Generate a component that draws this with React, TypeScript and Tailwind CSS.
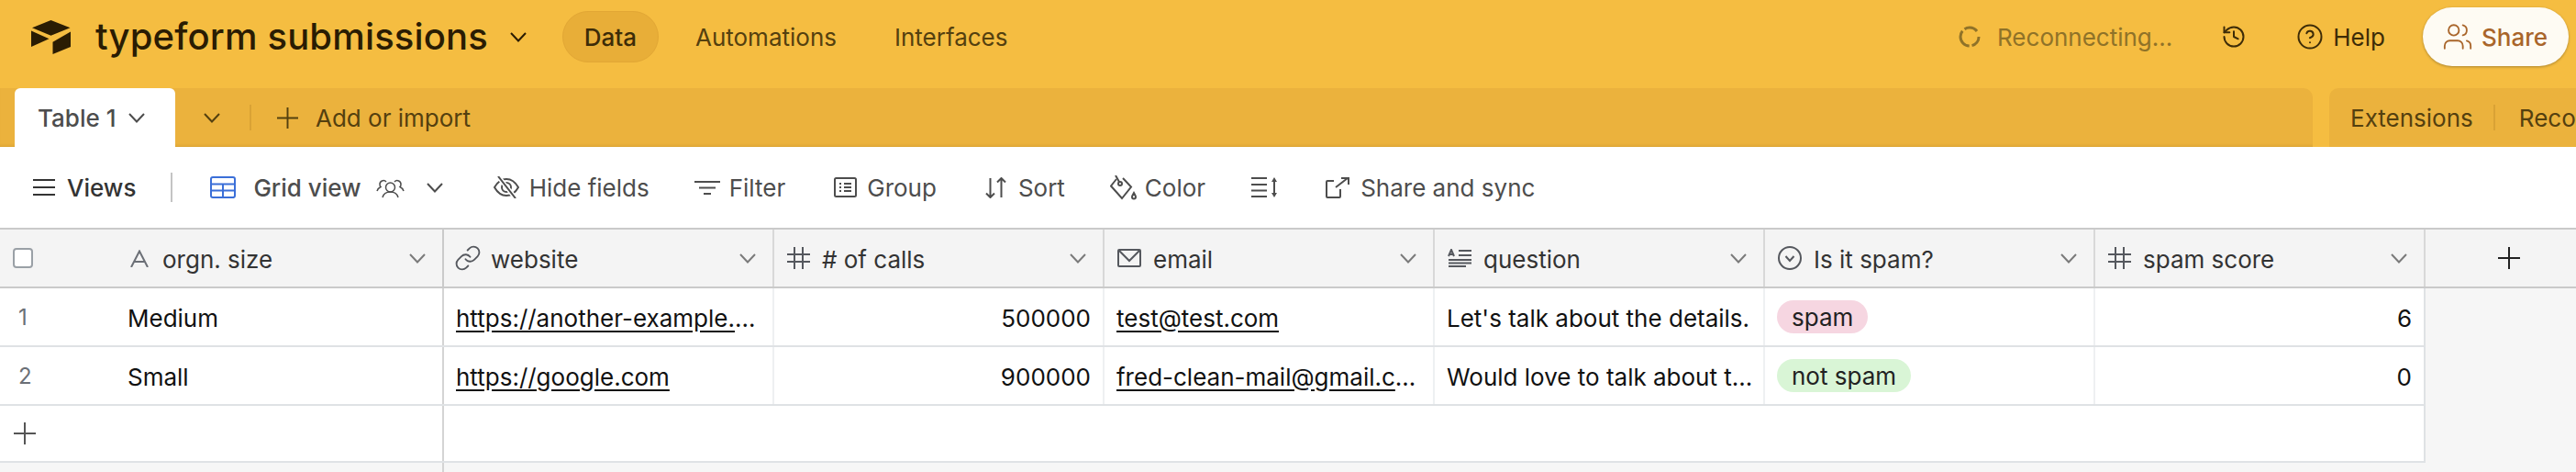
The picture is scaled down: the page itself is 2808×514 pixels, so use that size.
import React from 'react';
import { CircleHelp, History, Link, Users } from 'lucide-react';

const font = { fontFamily: 'Inter, "Noto Sans", sans-serif' };

// Airtable box logo
const Logo = () => (
  <svg width="43" height="37" viewBox="0 0 43 37" fill="#2a1c03">
    <path d="M21.5 0 42.500 8.300 21.500 16.800 1 8.300Z" />
    <path d="M23.500 23.800 43 12.500V29L23.500 37Z" />
    <path d="M0 11.500 19.500 20.300 0 29Z" />
  </svg>
);

const Chevron = ({ className = '' }: { className?: string }) => (
  <svg width="18" height="11" viewBox="0 0 18 11" fill="none" stroke="currentColor" strokeWidth="2" className={`shrink-0 ${className}`}>
    <path d="M1 1 9 9.500 17 1" />
  </svg>
);

const PlusIcon = ({ size, className = '' }: { size: number; className?: string }) => (
  <svg width={size} height={size} viewBox="0 0 24 24" fill="none" stroke="currentColor" strokeWidth="2" className={`shrink-0 ${className}`}>
    <path d="M12 0V24M0 12H24" />
  </svg>
);

const Spinner = () => (
  <svg width="24" height="24" viewBox="0 0 24 24" fill="none" stroke="#8f7228" strokeWidth="3">
    <circle cx="12" cy="12" r="10" strokeDasharray="13 3 22 3 15 7" />
  </svg>
);

const MenuIcon = () => (
  <svg width="24" height="18" viewBox="0 0 24 18" fill="none" stroke="#333" strokeWidth="2">
    <path d="M0 1H24M0 9H24M0 17H24" />
  </svg>
);

const GridIcon = () => (
  <svg width="28" height="24" viewBox="0 0 28 24" fill="none" stroke="#3b6fd8" strokeWidth="2">
    <rect x="1" y="1" width="26" height="22" rx="2" />
    <path d="M1 8.500H27M1 15.500H27M14 8.500V23" />
  </svg>
);

const PeopleIcon = () => (
  <svg width="31" height="23" viewBox="0 0 31 23" fill="none" stroke="#4d4d4d" strokeWidth="1.500">
    <circle cx="15.500" cy="11" r="5" />
    <path d="M7 22c1-4 4-6 8.500-6s7.500 2 8.500 6" />
    <path d="M11 5a4 4 0 0 0-7 3c0 1 .5 2 1 2.500C3 11.500 1.500 13 1 15" />
    <path d="M20 5a4 4 0 0 1 7 3c0 1-.5 2-1 2.500 2 1 3.500 2.500 4 4.500" />
  </svg>
);

const HideIcon = () => (
  <svg width="28" height="24" viewBox="0 0 28 24" fill="none" stroke="#4d4d4d" strokeWidth="2">
    <path d="M1 12C5 5 9 3 14 3S23 5 27 12C23 19 19 21 14 21S5 19 1 12Z" />
    <circle cx="14" cy="12" r="5" />
    <path d="M5 0 24 24" stroke="#fff" strokeWidth="5" />
    <path d="M5 0 24 24" />
  </svg>
);

const FilterIcon = () => (
  <svg width="28" height="15" viewBox="0 0 28 15" fill="none" stroke="#4d4d4d" strokeWidth="2">
    <path d="M0 1H28M5 7.500H23M10 14H18" />
  </svg>
);

const GroupIcon = () => (
  <svg width="25" height="22" viewBox="0 0 25 22" fill="none" stroke="#4d4d4d" strokeWidth="2">
    <rect x="1" y="1" width="23" height="20" rx="1.500" />
    <path d="M6 7H8M11 7H19M6 11H8M11 11H19M6 15H8M11 15H19" />
  </svg>
);

const SortIcon = () => (
  <svg width="23" height="23" viewBox="0 0 23 23" fill="none" stroke="#4d4d4d" strokeWidth="2">
    <path d="M5.500 1V22M1 17.500 5.500 22 10 17.500M17.500 22V1M13 5.500 17.500 1 22 5.500" />
  </svg>
);

const ColorIcon = () => (
  <svg width="29" height="27" viewBox="0 0 29 27" fill="none" stroke="#4d4d4d" strokeWidth="2">
    <path d="M7 4 1 11.500 13 25 23 12.500 14 3" />
    <circle cx="11" cy="9" r="2" />
    <path d="M10 7 6 0" />
    <path d="M26 19c1.500 2.500 2 3.500 2 4.500a2 2 0 0 1-4 0c0-1 .5-2 2-4.500Z" />
  </svg>
);

const RowHeightIcon = () => (
  <svg width="29" height="22" viewBox="0 0 29 22" fill="none" stroke="#4d4d4d" strokeWidth="2">
    <path d="M0 1H17M0 8H17M0 14.500H17M0 21H17" />
    <path d="M25 4V18" />
    <path d="M25 0 28 5H22ZM25 22 28 17H22Z" fill="#4d4d4d" stroke="none" />
  </svg>
);

const ShareSyncIcon = () => (
  <svg width="26" height="23" viewBox="0 0 26 23" fill="none" stroke="#4d4d4d" strokeWidth="2">
    <path d="M9 4H2a1 1 0 0 0-1 1v16a1 1 0 0 0 1 1h13a1 1 0 0 0 1-1V13" />
    <path d="M11 11 24 1M17 1H25V8" />
  </svg>
);

const TextIcon = () => (
  <svg width="20" height="19" viewBox="0 0 20 19" fill="none" stroke="#6b6f76" strokeWidth="2">
    <path d="M1 19 10 1.500 19 19M4.500 13H15.500" />
  </svg>
);

const HashIcon = () => (
  <svg width="25" height="24" viewBox="0 0 25 24" fill="none" stroke="#55585e" strokeWidth="2">
    <path d="M8 0V24M17 0V24M0 8H25M0 16H25" />
  </svg>
);

const MailIcon = () => (
  <svg width="26" height="20" viewBox="0 0 26 20" fill="none" stroke="#55585e" strokeWidth="2">
    <rect x="1" y="1" width="24" height="18" rx="1" />
    <path d="M1.500 1.500 13 13 24.500 1.500" />
  </svg>
);

const LongTextIcon = () => (
  <svg width="26" height="20" viewBox="0 0 26 20" fill="none" stroke="#55585e" strokeWidth="2">
    <path d="M1 8 4 1 7 8M2 6H6M12 2H26M12 7H26M1 12H26M1 15.500H26M1 19H20" />
  </svg>
);

const SelectIcon = () => (
  <svg width="26" height="26" viewBox="0 0 26 26" fill="none" stroke="#55585e" strokeWidth="2">
    <circle cx="13" cy="13" r="12" />
    <path d="M8.500 11 13 16 17.500 11" />
  </svg>
);

const ToolItem = ({ icon, label, className, gap }: { icon: React.ReactNode; label: string; className: string; gap: string }) => (
  <div className={`flex items-center ${className}`}>
    {icon}
    <span className={gap}>{label}</span>
  </div>
);

const columns = [
  { title: 'website', icon: <Link className="w-[30px] h-[30px] -mx-[3px] text-[#55585e]" strokeWidth={1.5} /> },
  { title: '# of calls', icon: <HashIcon /> },
  { title: 'email', icon: <MailIcon /> },
  { title: 'question', icon: <LongTextIcon /> },
  { title: 'Is it spam?', icon: <SelectIcon /> },
  { title: 'spam score', icon: <HashIcon /> },
];

const rows = [
  {
    id: 1,
    size: 'Medium',
    website: 'https://another-example.com/contact',
    calls: '500000',
    email: 'test@test.com',
    question: "Let's talk about the details.",
    spam: 'spam',
    pill: 'bg-[#f6d6e1]',
    score: '6',
  },
  {
    id: 2,
    size: 'Small',
    website: 'https://google.com',
    calls: '900000',
    email: 'fred-clean-mail@gmail.com',
    question: 'Would love to talk about t...',
    spam: 'not spam',
    pill: 'bg-[#d9f5d6]',
    score: '0',
  },
];

const cell = 'w-[360px] shrink-0 h-full border-r-2 border-[#eef0f2] flex items-center pl-[13px] pr-[13px] pt-[2px]';

export default function App() {
  return (
    <div className="w-[2808px] h-[514px] overflow-hidden bg-[#f6f6f6] text-[26px]" style={font}>
      {/* Top bar */}
      <div className="h-[96px] bg-[#f5bd41] flex items-center pl-[34px] pb-[16px] text-[#54400f]">
        <Logo />
        <h1 className="ml-[27px] text-[40px] font-medium tracking-[0.15px] text-[#2a1c03] leading-none">typeform submissions</h1>
        <Chevron className="ml-[24px] text-[#2a1c03]" />
        <div className="ml-[39px] w-[105px] h-[56px] rounded-full bg-[#e8ae38] border border-[#e2a735] flex items-center justify-center font-medium text-[#3d2c08]">
          Data
        </div>
        <span className="ml-[40px]">Automations</span>
        <span className="ml-[63px]">Interfaces</span>
        <div className="ml-auto flex items-center pr-[8px]">
          <Spinner />
          <span className="ml-[18px] text-[#8f7228]">Reconnecting...</span>
          <History className="ml-[53px] w-[28px] h-[28px] text-[#3d2c08]" strokeWidth={1.7} />
          <CircleHelp className="ml-[54px] w-[30px] h-[30px] text-[#3d2c08]" strokeWidth={1.6} />
          <span className="ml-[10px] text-[#3d2c08]">Help</span>
          <div className="ml-[41px] w-[159px] h-[64px] rounded-full bg-[#fefbf3] shadow-[0_1px_3px_rgba(0,0,0,0.3)] flex items-center justify-center text-[#a9652a] font-medium">
            <Users className="w-[34px] h-[34px] -ml-[2px]" strokeWidth={1.3} />
            <span className="ml-[9px]">Share</span>
          </div>
        </div>
      </div>

      {/* Tab row */}
      <div className="h-[64px] bg-[#f5bd41] flex text-[#54400f]">
        <div className="w-[2521px] bg-[#ebb23d] rounded-tr-[10px] flex items-end shadow-[inset_0_-3px_3px_-2px_rgba(160,110,20,0.25)]">
          <div className="ml-[16px] w-[175px] h-[64px] bg-white rounded-t-[6px] flex items-center pl-[25px] text-[#4d4d4d] font-medium">
            Table 1
            <Chevron className="ml-[14px]" />
          </div>
          <div className="h-[64px] flex items-center">
            <Chevron className="ml-[31px]" />
            <div className="ml-[32px] w-[2px] h-[28px] bg-[#d9a235]" />
            <PlusIcon size={23} className="ml-[28px]" />
            <span className="ml-[19px]">Add or import</span>
          </div>
        </div>
        <div className="ml-[18px] flex-1 bg-[#ebb23d] rounded-tl-[10px] flex items-center pl-[23px] overflow-hidden whitespace-nowrap">
          Extensions
          <div className="ml-[22px] w-[2px] h-[28px] shrink-0 bg-[#d9a235]" />
          <span className="ml-[26px]">Record templates</span>
        </div>
      </div>

      {/* View toolbar */}
      <div className="h-[88px] bg-white flex items-center text-[#4d4d4d]">
        <div className="ml-[36px]"><MenuIcon /></div>
        <span className="ml-[13px] font-medium text-[#333]">Views</span>
        <div className="ml-[38px] w-[2px] h-[32px] bg-[#c4c4c4]" />
        <div className="ml-[41px]"><GridIcon /></div>
        <span className="ml-[19px] font-medium">Grid view</span>
        <div className="ml-[16px]"><PeopleIcon /></div>
        <Chevron className="ml-[24px]" />
        <ToolItem className="ml-[55px]" gap="ml-[11px]" icon={<HideIcon />} label="Hide fields" />
        <ToolItem className="ml-[49px]" gap="ml-[10px]" icon={<FilterIcon />} label="Filter" />
        <ToolItem className="ml-[53px]" gap="ml-[11px]" icon={<GroupIcon />} label="Group" />
        <ToolItem className="ml-[53px]" gap="ml-[13px]" icon={<SortIcon />} label="Sort" />
        <ToolItem className="ml-[49px]" gap="ml-[9px]" icon={<ColorIcon />} label="Color" />
        <div className="ml-[50px]"><RowHeightIcon /></div>
        <ToolItem className="ml-[52px]" gap="ml-[12px]" icon={<ShareSyncIcon />} label="Share and sync" />
      </div>

      {/* Grid header */}
      <div className="h-[66px] bg-[#f4f4f4] border-y-2 border-[#cacaca] flex items-center text-[#333]">
        <div className="w-[484px] shrink-0 h-full border-r-2 border-[#cacaca] flex items-center pl-[14px] pr-[18px]">
          <div className="w-[22px] h-[22px] rounded-[4px] border-2 border-[#9aa0a6] bg-white" />
          <div className="ml-[106px]"><TextIcon /></div>
          <span className="ml-[15px] pt-[2px]">orgn. size</span>
          <Chevron className="ml-auto text-[#7a7a7a]" />
        </div>
        {columns.map((col) => (
          <div key={col.title} className="w-[360px] shrink-0 h-full border-r-2 border-[#d8d8d8] flex items-center pl-[14px] pr-[18px]">
            {col.icon}
            <span className="ml-[13px] pt-[2px]">{col.title}</span>
            <Chevron className="ml-auto text-[#7a7a7a]" />
          </div>
        ))}
        <div className="flex-1 pl-[79px]">
          <PlusIcon size={24} className="text-[#222]" />
        </div>
      </div>

      {/* Records */}
      <div className="w-[2644px] border-r-2 border-[#dfe2e5] bg-white text-[#111]">
        {rows.map((row) => (
          <div key={row.id} className="h-[64px] border-b-2 border-[#dfe2e5] flex items-center whitespace-nowrap">
            <div className="w-[484px] shrink-0 h-full border-r-2 border-[#d4d4d4] flex items-center pt-[2px]">
              <span className="w-[139px] pl-[20px] text-[#6b6f76] text-[24px]">{row.id}</span>
              {row.size}
            </div>
            <div className={cell}><span className="truncate underline underline-offset-4">{row.website}</span></div>
            <div className={`${cell} justify-end`}>{row.calls}</div>
            <div className={cell}><span className="truncate underline underline-offset-4">{row.email}</span></div>
            <div className={cell}><span>{row.question}</span></div>
            <div className="w-[360px] shrink-0 h-full border-r-2 border-[#eef0f2] flex items-center pl-[13px]">
              <span className={`${row.pill} h-[36px] px-[16px] rounded-full flex items-center text-[#222]`}>{row.spam}</span>
            </div>
            <div className="flex-1 h-full flex items-center justify-end pr-[13px] pt-[2px]">{row.score}</div>
          </div>
        ))}
        <div className="h-[62px] border-b-2 border-[#dfe2e5] flex items-center">
          <div className="w-[484px] h-full border-r-2 border-[#d4d4d4] flex items-center pl-[15px]">
            <PlusIcon size={24} className="text-[#555]" />
          </div>
        </div>
      </div>
      <div className="w-[484px] h-[12px] border-r-2 border-[#d4d4d4]" />
    </div>
  );
}
